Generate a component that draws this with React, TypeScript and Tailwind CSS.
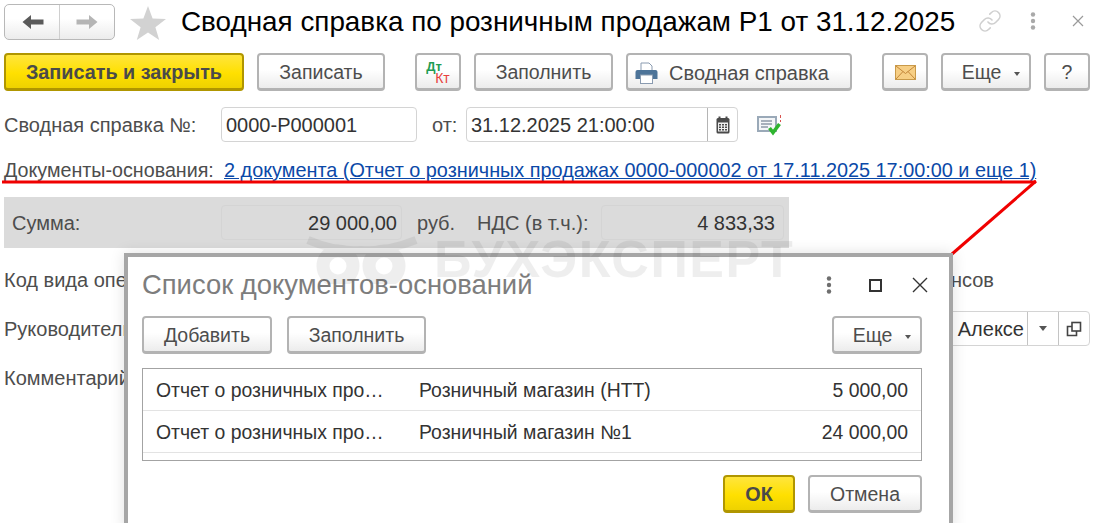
import React from 'react';
import { Link } from 'lucide-react';

const btn =
  'flex h-[38px] shrink-0 items-center justify-center rounded-[4px] border-2 border-[#b3b3b3] border-b-[3px] bg-[linear-gradient(180deg,#ffffff_45%,#ececec)] pt-[2px] text-[19.5px] text-[#4d4d4d]';
const yellow =
  'flex h-[38px] shrink-0 items-center justify-center rounded-[4px] border-2 border-[#b09600] border-b-[3px] bg-[linear-gradient(180deg,#ffe53d,#ffe000_55%,#eed200)] pt-[2px] text-[19.8px] font-bold text-[#4a4a4a]';
const input = 'flex h-[35px] items-center rounded-[4px] border border-[#d4d4d4] bg-white text-[20px] text-[#333]';

const Caret = () => <span className="ml-[13px] inline-block h-0 w-0 translate-y-[1px] border-x-[3.5px] border-t-[4px] border-x-transparent border-t-[#555]" />;

const Dots = ({ color }: { color: string }) => (
  <svg width="6" height="20" viewBox="0 0 6 20" fill={color}>
    <circle cx="3" cy="3.5" r="2.2" />
    <circle cx="3" cy="10" r="2.2" />
    <circle cx="3" cy="16.5" r="2.2" />
  </svg>
);

const Arrow = ({ color, flip }: { color: string; flip?: boolean }) => (
  <svg width="22" height="16" viewBox="0 0 22 16" className={flip ? 'rotate-180' : ''}>
    <path d="M0.5 8 L9 1 V5.5 H21.5 V10.5 H9 V15 Z" fill={color} />
  </svg>
);

const PrinterIcon = () => (
  <svg width="23" height="22" viewBox="0 0 23 22">
    <path d="M6 1 H14 L17 4 V9 H6 Z" fill="#fff" stroke="#8a9bb0" />
    <path d="M2.5 8 H20.5 Q22.5 8 22.5 10 V17 H0.5 V10 Q0.5 8 2.5 8 Z" fill="#4d7499" />
    <rect x="5.5" y="13" width="12" height="8.5" fill="#fff" stroke="#8a9bb0" />
  </svg>
);

const MailIcon = () => (
  <svg width="21" height="15" viewBox="0 0 21 15">
    <rect x="0.5" y="0.5" width="20" height="14" fill="#f7cf85" stroke="#c99a4a" />
    <path d="M1 1 L10.5 8.5 L20 1 M1 14 L8 6.5 M20 14 L13 6.5" fill="none" stroke="#c4873a" />
  </svg>
);

const CalendarIcon = () => (
  <svg width="14" height="18" viewBox="0 0 14 18">
    <rect x="0.5" y="2" width="13" height="15.5" rx="1.5" fill="#4a4a4a" />
    <rect x="2.5" y="0.5" width="2" height="3.5" fill="#4a4a4a" />
    <rect x="9.5" y="0.5" width="2" height="3.5" fill="#4a4a4a" />
    <rect x="2" y="6.5" width="10" height="9" fill="#efefef" />
    <path d="M3 8h2v1.5H3zM6 8h2v1.5H6zM9 8h2v1.5H9zM3 10.5h2V12H3zM6 10.5h2V12H6zM9 10.5h2V12H9zM3 13h2v1.5H3zM6 13h2v1.5H6zM9 13h2v1.5H9z" fill="#4a4a4a" />
  </svg>
);

const DocCheckIcon = () => (
  <svg width="25" height="22" viewBox="0 0 25 22">
    <rect x="1" y="3" width="18" height="14" fill="#f4f6f8" stroke="#9aa9b8" strokeWidth="2" />
    <path d="M4 7h11M4 10h11M4 13h7" stroke="#8d99a6" strokeWidth="1.3" />
    <path d="M12.5 14 L16 18.5 L22.5 10" fill="none" stroke="#2fb52f" strokeWidth="3.6" />
    <path d="M23.5 1v3M23.5 6v2" stroke="#d9534f" />
  </svg>
);

const CopyIcon = () => (
  <svg width="16" height="16" viewBox="0 0 16 16" fill="none" stroke="#444" strokeWidth="1.6">
    <rect x="6" y="1.5" width="8.5" height="8.5" />
    <path d="M6 5.5 H1.5 V14.5 H10.5 V10" />
  </svg>
);

const Watermark = () => (
  <div className="pointer-events-none absolute left-[306px] top-[233px] z-30 flex items-center gap-[16px] opacity-[0.07]">
    <svg width="112" height="50" viewBox="0 0 112 50" fill="none" stroke="#222" strokeWidth="13">
      <circle cx="32" cy="32" r="15" />
      <circle cx="78" cy="32" r="15" />
      <path d="M2 6 Q30 18 55 16 Q80 18 110 6" strokeWidth="8" />
    </svg>
    <span className="text-[52px] font-bold leading-none tracking-[1.5px] text-[#222]">БУХЭКСПЕРТ</span>
  </div>
);

const rows = [
  { doc: 'Отчет о розничных про…', shop: 'Розничный магазин (НТТ)', sum: '5 000,00' },
  { doc: 'Отчет о розничных про…', shop: 'Розничный магазин №1', sum: '24 000,00' },
];

const Modal = () => (
  <div className="absolute left-[124px] top-[253px] z-20 h-[280px] w-[829px] border-4 border-[#a6a6a6] bg-white pl-[14px] pr-[27px] shadow-[0_0_14px_rgba(0,0,0,0.12)]">
    <div className="flex h-[59px] items-center justify-between pb-[3px]">
      <span className="text-[27.4px] text-[#7d7d7d]">Список документов-оснований</span>
      <div className="-mr-[6px] flex items-center">
        <Dots color="#6e6e6e" />
        <span className="ml-[37px] h-[13px] w-[13px] border-2 border-[#333]" />
        <svg width="16" height="16" viewBox="0 0 16 16" className="ml-[30px]" stroke="#333" strokeWidth="1.4">
          <path d="M1 1 L15 15 M15 1 L1 15" />
        </svg>
      </div>
    </div>
    <div className="flex items-center">
      <div className={`${btn} w-[130px]`}>Добавить</div>
      <div className={`${btn} ml-[15px] w-[139px]`}>Заполнить</div>
      <div className={`${btn} ml-auto w-[90px] pl-[10px]`}>Еще<Caret /></div>
    </div>
    <div className="mt-[14px] h-[93px] border border-[#a3a3a3] text-[19.4px] text-[#333]">
      {rows.map((r) => (
        <div key={r.sum} className="flex h-[42px] items-center border-b border-[#e3e3e3] px-[13px] pt-[2px]">
          <span className="w-[263px]">{r.doc}</span>
          <span>{r.shop}</span>
          <span className="ml-auto">{r.sum}</span>
        </div>
      ))}
    </div>
    <div className="mt-[14px] flex justify-end">
      <div className={`${yellow} w-[72px]`}>ОК</div>
      <div className={`${btn} ml-[13px] w-[114px]`}>Отмена</div>
    </div>
  </div>
);

export default function App() {
  return (
    <div className="relative h-[523px] w-[1095px] overflow-hidden bg-white pl-[4px] font-['Liberation_Sans',Arial,sans-serif] text-[20px] text-[#4d4d4d]">
      {/* title row */}
      <div className="flex h-[53px] items-start pt-[4px]">
        <div className="flex h-[36px] w-[111px] rounded-[5px] border border-[#b8b8b8] bg-[linear-gradient(180deg,#ffffff_40%,#ececec)]">
          <div className="flex w-[55px] items-center justify-center border-r border-[#cfcfcf] pl-[2px]"><Arrow color="#5a5a5a" /></div>
          <div className="flex flex-1 items-center justify-center"><Arrow color="#b5b5b5" flip /></div>
        </div>
        <svg width="36" height="34" viewBox="0 0 36 34" className="ml-[15px] mt-[2px]">
          <path d="M18 0 L22.6 12.6 L36 13 L25.4 21.2 L29.2 34 L18 26.5 L6.8 34 L10.6 21.2 L0 13 L13.4 12.6 Z" fill="#d2d2d2" />
        </svg>
        <span className="ml-[15px] whitespace-nowrap text-[27.85px] leading-[35px] text-black">Сводная справка по розничным продажам Р1 от 31.12.2025</span>
        <Link size={24} strokeWidth={1.6} className="ml-[23px] mt-[5px] text-[#cfcfcf]" />
        <div className="ml-[28px] mt-[7px]"><Dots color="#a9a9a9" /></div>
        <svg width="12" height="12" viewBox="0 0 12 12" className="ml-[36px] mt-[11px]" stroke="#9a9a9a" strokeWidth="1.2">
          <path d="M1 1 L11 11 M11 1 L1 11" />
        </svg>
      </div>

      {/* command bar */}
      <div className="flex h-[54px] items-start">
        <div className={`${yellow} w-[240px]`}>Записать и закрыть</div>
        <div className={`${btn} ml-[13px] w-[128px]`}>Записать</div>
        <div className={`${btn} ml-[30px] w-[46px] flex-col pt-0`}>
          <span className="-ml-[8px] text-[13px] font-bold leading-[11px] text-[#1f9d55]">Дт</span>
          <span className="ml-[9px] text-[14px] leading-[12px] text-[#e8413c]">Кт</span>
        </div>
        <div className={`${btn} ml-[13px] w-[139px]`}>Заполнить</div>
        <div className={`${btn} ml-[13px] w-[226px] gap-[11px] pr-[14px] pt-0 text-[20px]`}><PrinterIcon />Сводная справка</div>
        <div className={`${btn} ml-[30px] w-[46px]`}><MailIcon /></div>
        <div className={`${btn} ml-[13px] w-[90px] pl-[10px]`}>Еще<Caret /></div>
        <div className={`${btn} ml-[13px] w-[46px]`}>?</div>
      </div>

      {/* number row */}
      <div className="flex h-[53px] items-start">
        <span className="w-[217px] pt-[1px] leading-[35px]">Сводная справка №:</span>
        <div className={`${input} w-[196px] pl-[4px] pt-[1px]`}>0000-Р000001</div>
        <span className="ml-[15px] w-[34px] pt-[1px] leading-[35px]">от:</span>
        <div className={`${input} w-[272px] border-[#b5b5b5] pl-[4px]`}>
          <span className="flex-1 pt-[1px]">31.12.2025 21:00:00</span>
          <span className="flex h-full w-[30px] items-center justify-center border-l border-[#b5b5b5]"><CalendarIcon /></span>
        </div>
        <div className="ml-[19px] mt-[7px]"><DocCheckIcon /></div>
      </div>

      {/* base documents */}
      <div className="flex h-[37px] items-start whitespace-nowrap text-[19.7px] leading-[20px]">
        <span className="w-[220px]">Документы-основания:</span>
        <a className="text-[19.85px] text-[#0b49a8] underline">2 документа (Отчет о розничных продажах 0000-000002 от 17.11.2025 17:00:00 и еще 1)</a>
      </div>

      {/* totals */}
      <div className="flex h-[51px] w-[785px] items-center bg-[#dbdbdb] pl-[8px]">
        <span className="w-[209px] pt-[1px]">Сумма:</span>
        <div className="flex h-[35px] w-[181px] items-center justify-end rounded-[4px] border border-[#d4d4d4] pr-[4px] pt-[1px] text-[#333]">29 000,00</div>
        <span className="ml-[15px] w-[60px] pt-[1px]">руб.</span>
        <span className="w-[124px] pt-[1px]">НДС (в т.ч.):</span>
        <div className="flex h-[35px] w-[183px] items-center justify-end rounded-[4px] border border-[#d4d4d4] pr-[8px] pt-[1px] text-[#333]">4 833,33</div>
      </div>

      {/* fields under the dialog */}
      <div className="mt-[15px] flex h-[34px] items-center justify-between pr-[101px]">
        <span>Код вида операции:</span>
        <span>авансов</span>
      </div>
      <div className="mt-[14px] flex h-[35px] items-center justify-between pr-[5px]">
        <span>Руководитель:</span>
        <div className={`${input} w-[200px] justify-end`}>
          <span className="pr-[3px]">Алексе</span>
          <span className="flex h-full w-[31px] items-center justify-center border-l border-[#c4c4c4]"><span className="h-0 w-0 border-x-[4px] border-t-[5px] border-x-transparent border-t-[#555]" /></span>
          <span className="flex h-full w-[31px] items-center justify-center border-l border-[#c4c4c4]"><CopyIcon /></span>
        </div>
      </div>
      <div className="mt-[15px] flex h-[34px] items-center">Комментарий:</div>

      <Modal />
      <Watermark />

      {/* red annotation */}
      <svg width="1095" height="523" className="pointer-events-none absolute left-0 top-0 z-10">
        <path d="M2 182 L1036 182" stroke="#f00000" strokeWidth="3" fill="none" />
        <path d="M1036 181 L952 254" stroke="#f00000" strokeWidth="3" fill="none" />
      </svg>
    </div>
  );
}
